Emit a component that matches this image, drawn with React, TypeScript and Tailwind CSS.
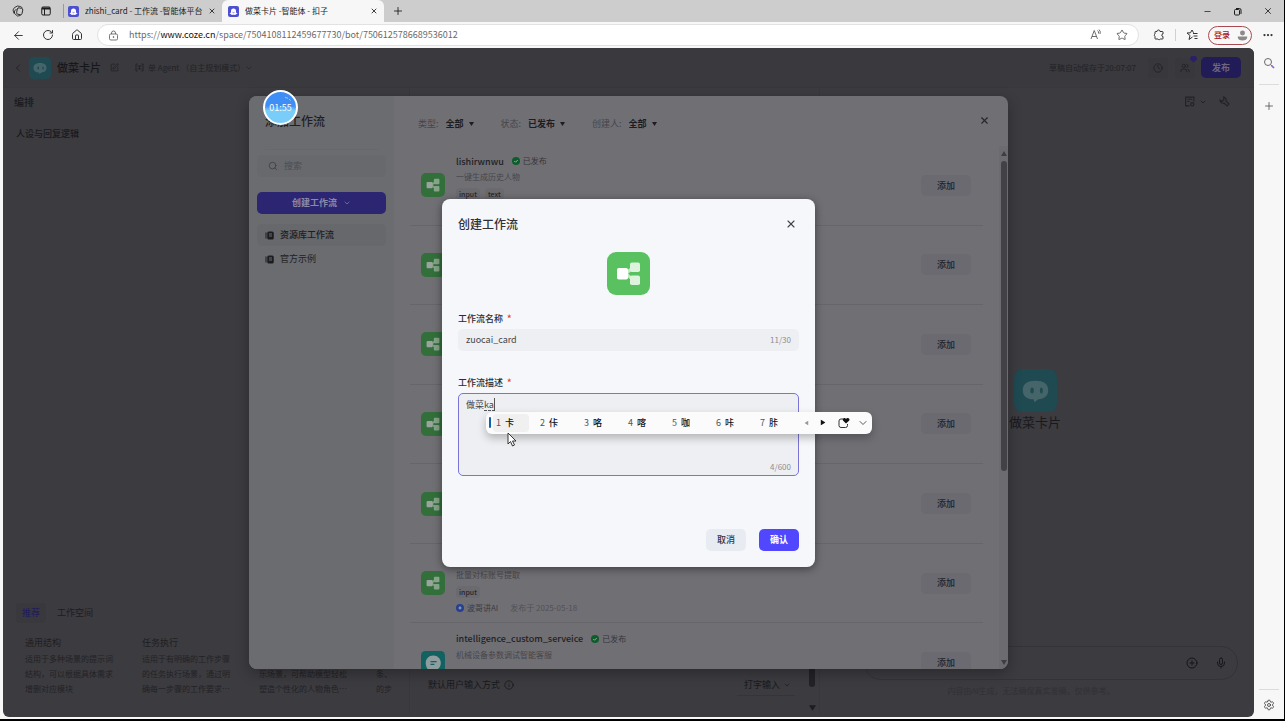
import { useState } from 'react';
import type { ReactNode } from 'react';
import {
  ArrowLeft,
  ChevronDown,
  ChevronLeft,
  CirclePlus,
  Clock,
  Home,
  Info,
  Mic,
  Minus,
  MoreHorizontal,
  Plus,
  RotateCw,
  Search,
  Settings,
  SquarePen,
  Star,
  Users,
  X,
} from 'lucide-react';

interface Workflow {
  id: number;
  name?: string;
  description?: string;
  tags?: string[];
  author?: string;
  publishedAt?: string;
  icon: 'flow' | 'chat';
}

const WORKFLOWS: Workflow[] = [
  { id: 1, name: 'lishirwnwu', description: '一键生成历史人物', tags: ['input', 'text'], icon: 'flow' },
  { id: 2, icon: 'flow' },
  { id: 3, icon: 'flow' },
  { id: 4, icon: 'flow' },
  { id: 5, icon: 'flow' },
  {
    id: 6,
    description: '批量对标账号提取',
    tags: ['input'],
    author: '波哥讲AI',
    publishedAt: '发布于 2025-05-18',
    icon: 'flow',
  },
  { id: 7, name: 'intelligence_custom_serveice', description: '机械设备参数调试智能客服', icon: 'chat' },
];

const TEMPLATES = [
  { title: '通用结构', lines: ['适用于多种场景的提示词', '结构，可以根据具体需求', '增删对应模块'] },
  { title: '任务执行', lines: ['适用于有明确的工作步骤', '的任务执行场景，通过明', '确每一步骤的工作要求…'] },
  { title: '', lines: ['', '乐场景，可帮助模型轻松', '塑造个性化的人物角色…'] },
  { title: '', lines: ['', '条、', '的步'] },
];

const FILTERS = [
  { id: 'type', label: '类型:', value: '全部' },
  { id: 'status', label: '状态:', value: '已发布' },
  { id: 'creator', label: '创建人:', value: '全部' },
];

const CANDIDATES = ['卡', '佧', '咯', '喀', '咖', '咔', '胩'];

function Favicon() {
  return (
    <svg className="size-[11px] shrink-0" viewBox="0 0 22 22">
      <rect width="22" height="22" rx="4" fill="#4d4fd0" />
      <path d="M6 10a5 5 0 0 1 10 0v3l3 2-3 1.5c-1 2-3 1-5 1s-4 1-5-1L3 15l3-2z" fill="#fff" />
      <path d="M9 12.5q2 2 4 0" fill="none" stroke="#4d4fd0" strokeWidth="1.5" />
    </svg>
  );
}

function BotAvatar({ className }: { className: string }) {
  return (
    <svg className={className} viewBox="0 0 44 44">
      <rect width="44" height="44" rx="9" fill="#1f4a52" />
      <path d="M22 12c8 0 13 3 13 9.500s-4 9-10 9.500l-4 3-1-3c-7 0-11-3-11-9.500S14 12 22 12z" fill="#45656a" />
      <ellipse cx="18.500" cy="22" rx="1.800" ry="3" fill="#1f4a52" />
      <ellipse cx="28" cy="22" rx="1.500" ry="3" fill="#1f4a52" />
    </svg>
  );
}

function FlowIcon({ className, bright }: { className: string; bright?: boolean }) {
  return (
    <svg className={className} viewBox="0 0 43 43">
      <rect width="43" height="43" rx="9" fill={bright ? '#59c160' : '#336f3b'} />
      <path d="M19 21.500 26 15.500M19 21.500 26 28" stroke={bright ? '#c4eac7' : '#7d9f81'} strokeWidth="3" />
      <rect x="23" y="10.500" width="10" height="9.500" rx="1.800" fill={bright ? '#ddf3de' : '#84a388'} />
      <rect x="23" y="23.500" width="10" height="9.500" rx="1.800" fill={bright ? '#ddf3de' : '#84a388'} />
      <rect x="10" y="16" width="11" height="11.500" rx="1.800" fill={bright ? '#ffffff' : '#9aa39d'} />
    </svg>
  );
}

function ChatIcon() {
  return (
    <svg className="size-6" viewBox="0 0 43 43">
      <rect width="43" height="43" rx="8" fill="#116260" />
      <path d="M22 8c8 0 13.500 6 13.500 13.500S30 35 22 35c-3 0-5-.5-7 .5l-5 2 1.500-6C9.500 29 8.500 25 8.500 21.500 8.500 14 14 8 22 8z" fill="#8f9d9f" />
      <path d="M17 19h11M17 24h7" stroke="#116260" strokeWidth="2.500" />
    </svg>
  );
}

function BookIcon() {
  return (
    <svg className="size-[9px]" viewBox="0 0 18 18">
      <path d="M2 3v12" stroke="#2c2c31" strokeWidth="2.500" />
      <rect x="4.500" y="1" width="13" height="16" rx="3" fill="#1c1c21" />
      <path d="M8 6h6M8 10h6" stroke="#6b6c70" strokeWidth="2" />
    </svg>
  );
}

function Caret({ className }: { className: string }) {
  return (
    <svg className={className} viewBox="0 0 10 8">
      <path d="M0 0h10L5 8z" fill="currentColor" />
    </svg>
  );
}

function Published() {
  return (
    <span className="flex items-center gap-[3px] text-[8px] text-[#35353a]">
      <svg className="size-2" viewBox="0 0 16 16">
        <circle cx="8" cy="8" r="8" fill="#0d5c2c" />
        <path d="m4.500 8 2.500 2.500 4.500-4.500" stroke="#a0a8a3" strokeWidth="2" fill="none" />
      </svg>
      已发布
    </span>
  );
}

function BrowserTab({ title, active }: { title: string; active?: boolean }) {
  return (
    <div className={`flex items-center gap-1.5 pr-1.5 text-[8px] text-[#1d1d1d] ${active ? 'w-[162px] rounded-t-md bg-[#f7f7f7] pl-1.5' : 'w-[158px] pl-1'}`}>
      <Favicon />
      <span className="min-w-0 flex-1 whitespace-nowrap">{title}</span>
      <button aria-label="关闭标签页">
        <X className="size-2" strokeWidth={2.5} />
      </button>
    </div>
  );
}

function TabStrip() {
  return (
    <header className="flex h-[22px] shrink-0 bg-[#cdcdcd] text-[#1c1c1c]">
      <button className="flex w-[35px] items-center justify-center" aria-label="工作区">
        <svg className="size-3" viewBox="0 0 24 24" fill="none" stroke="currentColor" strokeWidth="1.700">
          <path d="m4 17-2-7 3-5 6-3 6 1 4 3" />
          <rect x="10" y="6" width="11" height="13" rx="3" transform="rotate(12 15 12)" />
          <path d="m9 8-4 4v5l6 5 6-1" />
        </svg>
      </button>
      <button className="flex w-[21px] items-center justify-center" aria-label="标签操作">
        <svg className="size-[10px]" viewBox="0 0 20 20" fill="none" stroke="currentColor" strokeWidth="2">
          <rect x="1.500" y="2" width="17" height="16" rx="2.500" />
          <path d="M2 5h16" strokeWidth="4" />
          <path d="M7 6v12" />
        </svg>
      </button>
      <div className="ml-[7px] h-3.5 w-px self-center bg-[#9a9a9a]" />
      <BrowserTab title="zhishi_card - 工作流 -智能体平台" />
      <BrowserTab title="做菜卡片 -智能体 - 扣子" active />
      <button className="flex w-[28px] items-center justify-center" aria-label="新建标签页">
        <Plus className="size-3" strokeWidth={1.75} />
      </button>
      <div className="ml-auto flex items-center gap-[21px] pr-[11px]">
        <button aria-label="最小化"><Minus className="size-[9px]" /></button>
        <button aria-label="还原">
          <svg className="size-[9px]" viewBox="0 0 18 18" fill="none" stroke="currentColor" strokeWidth="2">
            <rect x="3" y="5" width="10" height="11" rx="2" />
            <path d="M6 3h7a3 3 0 0 1 3 3v8" />
          </svg>
        </button>
        <button aria-label="关闭"><X className="size-[10px]" /></button>
      </div>
    </header>
  );
}

function AddressBar() {
  return (
    <div className="flex h-[26px] shrink-0 items-center bg-[#f7f7f7] text-[#333]">
      <div className="flex w-[97px] shrink-0 items-center gap-[17px] pl-3">
        <button aria-label="后退"><ArrowLeft className="size-[13px]" strokeWidth={1.75} /></button>
        <button aria-label="刷新"><RotateCw className="size-3" strokeWidth={2} /></button>
        <button aria-label="主页"><Home className="size-3" strokeWidth={2} /></button>
      </div>
      <div className="flex h-[22px] min-w-0 flex-1 items-center rounded-full border border-[#e2e2e2] bg-white px-2.5">
        <svg className="size-[11px] shrink-0" viewBox="0 0 22 22" fill="none" stroke="#666" strokeWidth="1.800">
          <rect x="3" y="8" width="16" height="12" rx="2.500" />
          <path d="M7 8V6a4 4 0 0 1 8 0v2" />
          <circle cx="11" cy="14" r="1" fill="#666" />
        </svg>
        <a href="#" className="ml-[10px] min-w-0 flex-1 truncate text-[9px] text-[#6a6a6a]">
          https://<span className="text-[#111]">www.coze.cn</span>/space/7504108112459677730/bot/7506125786689536012
        </a>
        <button aria-label="朗读此页面">
          <svg className="size-3" viewBox="0 0 24 24" fill="none" stroke="#555" strokeWidth="1.700">
            <path d="m2 20 6.500-17L15 20M4 15h9" />
            <path d="M15 3q3 2 2 6M18 1q4 4 2 9" />
          </svg>
        </button>
        <button className="ml-3.5" aria-label="收藏"><Star className="size-3" color="#555" strokeWidth={1.75} /></button>
      </div>
      <div className="flex shrink-0 items-center pr-2.5 pl-3.5">
        <button aria-label="扩展">
          <svg className="size-3" viewBox="0 0 24 24" fill="none" stroke="currentColor" strokeWidth="2">
            <path d="M8 5a3 3 0 0 1 6 0h5a1 1 0 0 1 1 1v4a2.500 2.500 0 0 0 0 5v4a1 1 0 0 1-1 1h-4a3 3 0 0 1-5 0H5a1 1 0 0 1-1-1v-4a3 3 0 0 1 0-5V6a1 1 0 0 1 1-1z" />
          </svg>
        </button>
        <div className="ml-2.5 h-3 w-px bg-[#d0d0d0]" />
        <button className="ml-2.5" aria-label="收藏夹">
          <svg className="size-3" viewBox="0 0 24 24" fill="none" stroke="currentColor" strokeWidth="2">
            <path d="m13 16-7 5 2-8-6-5 7-.5L12 2l3 5.500M14 9h9M15 14h8M17 19h6" />
          </svg>
        </button>
        <button className="ml-2.5 flex h-[19px] w-[44px] items-center justify-between rounded-full border border-[#a94a50] pr-[3px] pl-[5px] text-[8px] font-medium text-[#a3141f]">
          登录
          <svg className="size-[11px]" viewBox="0 0 20 20" fill="#8a8a8a">
            <circle cx="10" cy="5.500" r="4.500" />
            <path d="M1.500 12h17v1c0 4-4 6-8.500 6s-8.500-2-8.500-6z" />
          </svg>
        </button>
        <button className="ml-2.5" aria-label="更多"><MoreHorizontal className="size-3" strokeWidth={2.5} /></button>
      </div>
    </div>
  );
}

function BrowserSidebar() {
  return (
    <aside className="flex w-[30px] shrink-0 flex-col items-center bg-[#f7f7f7] pt-[9px] pb-2 text-[#444]">
      <button aria-label="搜索">
        <svg className="size-3" viewBox="0 0 24 24" fill="none" strokeWidth="2">
          <circle cx="10" cy="10" r="7" stroke="#6a6a6a" />
          <path d="m15 15 3 3" stroke="#6a6a6a" />
          <path d="m17 17 5 5" stroke="#9b5fd0" strokeWidth="3.500" />
        </svg>
      </button>
      <div className="mt-[15px] h-px w-5 bg-[#dcdcdc]" />
      <button className="mt-[15px]" aria-label="添加"><Plus className="size-3" strokeWidth={1.5} /></button>
      <div className="mt-auto h-px w-5 bg-[#dcdcdc]" />
      <button className="mt-[9px]" aria-label="设置"><Settings className="size-3" strokeWidth={1.75} /></button>
    </aside>
  );
}

function EditorHeader() {
  return (
    <div className="flex h-10 shrink-0 items-center border-b border-[#38373b] bg-[#3a393d] pr-[13px] pl-[9px] text-[#222226]">
      <ChevronLeft className="size-3" />
      <BotAvatar className="ml-[5px] size-[22px]" />
      <h1 className="ml-[6px] text-[11px] font-medium text-[#17171b]">做菜卡片</h1>
      <SquarePen className="ml-[9px] size-[9px]" />
      <svg className="ml-4 size-[9px]" viewBox="0 0 18 18" fill="none" stroke="currentColor" strokeWidth="2">
        <path d="M5 2H2v14h3M13 2h3v14h-3M5 6h8M9 6v6M5 12h8" />
      </svg>
      <button className="ml-1 flex items-center text-[8px]">
        单 Agent （自主规划模式）
        <ChevronDown className="size-2" />
      </button>
      <span className="ml-auto text-[8px]">草稿自动保存于20:07:07</span>
      <button className="ml-3 flex size-5 items-center justify-center rounded bg-[#38373b]" aria-label="历史">
        <Clock className="size-[10px]" />
      </button>
      <button className="relative ml-[7px] flex size-5 items-center justify-center rounded bg-[#38373b]" aria-label="协作">
        <Users className="size-[10px]" />
        <svg className="absolute -top-0.5 -right-0.5 size-[7px]" viewBox="0 0 14 14">
          <path d="M3 0h8l3 4v3l-7 6-7-6V4z" fill="#2a2069" />
        </svg>
      </button>
      <button className="ml-1.5 h-[21px] w-10 rounded-[5px] bg-[#211b57] text-[9px] font-bold text-[#69677d]">发布</button>
    </div>
  );
}

function EditorBody() {
  return (
    <div className="grid min-h-0 flex-1 grid-cols-[407px_410px_1fr] text-[#222226]">
      <section className="flex min-w-0 flex-col overflow-hidden border-r border-[#39383c]">
        <h2 className="mt-1.5 ml-[11px] text-[10px] leading-4 font-medium text-[#19191d]">编排</h2>
        <h3 className="mt-4 ml-[13px] text-[9px] leading-4 font-medium text-[#19191d]">人设与回复逻辑</h3>
        <div className="mt-auto ml-[13px] flex items-center gap-[11px] text-[9px]">
          <button className="h-5 w-[30px] rounded bg-[#39383d] font-medium text-[#231e5c]">推荐</button>
          <button className="text-[#1c1c20]">工作空间</button>
        </div>
        <div className="mt-3 mb-[21px] ml-[22px] flex">
          {TEMPLATES.map((template, i) => (
            <div key={i} className="w-[117px] shrink-0">
              <p className="h-4 text-[9px] leading-4 text-[#1e1e22]">{template.title}</p>
              {template.lines.map((line, j) => (
                <p key={j} className="h-[15px] text-[8px] leading-[15px] text-[#222226]">{line}</p>
              ))}
            </div>
          ))}
        </div>
      </section>

      <section className="flex items-end border-r border-[#39383c] pb-[21px] pl-[18px] text-[9px] text-[#19191d]">
        <label htmlFor="input-mode" className="flex h-[22px] items-center gap-1">
          默认用户输入方式
          <Info className="size-[10px]" />
        </label>
        <div className="relative ml-auto flex h-[22px] items-center border-b border-[#353438]">
          <select id="input-mode" className="w-[58px] appearance-none pl-[7px] outline-none">
            <option>打字输入</option>
          </select>
          <ChevronDown className="pointer-events-none absolute right-1 size-2" />
        </div>
        <div className="-mb-[21px] ml-2.5 flex h-full w-3.5 flex-col items-center justify-end gap-[18px] pb-1.5">
          <div className="h-24 w-1.5 rounded-full bg-[#232327]" />
          <Caret className="h-1.5 w-[7px] text-[#1d1d20]" />
        </div>
      </section>

      <section className="flex min-w-0 flex-col">
        <div className="flex items-center justify-end gap-2 pt-2 pr-6">
          <button className="flex items-center gap-1" aria-label="调试">
            <svg className="size-[11px]" viewBox="0 0 20 20" fill="none" stroke="currentColor" strokeWidth="2">
              <path d="M10 18H3V2h15v8M6 6h9M6 10h4" />
              <circle cx="15" cy="15" r="3" />
            </svg>
            <ChevronDown className="size-2" strokeWidth={3} />
          </button>
          <button className="ml-1" aria-label="工具">
            <svg className="size-[11px]" viewBox="0 0 22 22" fill="none" stroke="currentColor" strokeWidth="2.200">
              <path d="M9 2a6 6 0 0 1 5 8l6 6-4 4-6-6a6 6 0 0 1-8-6l4 3 4-4z" />
            </svg>
          </button>
        </div>
        <div className="flex flex-1 flex-col items-center justify-center pt-12 pr-1">
          <BotAvatar className="size-[43px]" />
          <p className="text-[13px] leading-5 text-[#19191d]">做菜卡片</p>
        </div>
        <div className="mr-4 ml-11 flex h-[34px] items-center justify-end gap-[17px] rounded-full border border-[#343337] pr-2.5 text-[#17171a]">
          <button aria-label="附件"><CirclePlus className="size-3" /></button>
          <button aria-label="语音"><Mic className="size-3" /></button>
        </div>
        <p className="mt-[3px] mb-[18px] pr-3 text-center text-[8px] leading-4 text-[#313035]">
          内容由AI生成，无法确保真实准确，仅供参考。
        </p>
      </section>
    </div>
  );
}

function WorkflowRow({ workflow }: { workflow: Workflow }) {
  return (
    <li className="flex items-center border-b border-[#66656a] pr-3 pl-[11px]">
      {workflow.icon === 'flow' ? <FlowIcon className="size-6" /> : <ChatIcon />}
      <div className="ml-[11px] h-16 flex-1">
        <div className="flex h-4 items-center gap-2">
          <span className="text-[9px] font-medium text-[#1f1f24]">{workflow.name}</span>
          {workflow.name && <Published />}
        </div>
        <p className="h-4 text-[8px] leading-4 text-[#46464b]">{workflow.description}</p>
        <div className="flex h-[18px] items-center gap-[5px]">
          {workflow.tags?.map((tag) => (
            <span key={tag} className="rounded-sm bg-[#6b6a6f] px-[3px] text-[7px] leading-3 font-medium text-[#27272c]">{tag}</span>
          ))}
        </div>
        {workflow.author && (
          <div className="flex h-3.5 items-center text-[8px] text-[#3b3b41]">
            <svg className="mr-[3px] size-2" viewBox="0 0 16 16">
              <circle cx="8" cy="8" r="8" fill="#26408e" />
              <path d="m8 4 3.500 4L8 11.500 4.500 8z" fill="#8792b8" />
            </svg>
            {workflow.author}
            <span className="ml-3 text-[#515156]">{workflow.publishedAt}</span>
          </div>
        )}
      </div>
      <button className="h-[21px] w-[50px] rounded-[5px] bg-[#6b6a70] text-[9px] font-medium text-[#222229]">添加</button>
    </li>
  );
}

function AddWorkflowPanel() {
  return (
    <div className="flex h-full w-[759px] max-w-full overflow-hidden rounded-lg bg-[#706f74] shadow-[0_4px_14px_rgba(0,0,0,0.3)]">
      <nav className="w-[145px] shrink-0 bg-[#6b6c70] px-2 pt-4">
        <h2 className="ml-2 text-[12px] leading-[18px] font-medium text-[#1f1f24]">添加工作流</h2>
        <div className="mx-2 mt-[19px] h-px bg-[#67686c]" />
        <label className="mt-[5px] flex h-[22px] items-center rounded-[5px] bg-[#68696d] pl-[11px] text-[#3f4045]">
          <Search className="size-[10px] shrink-0" />
          <input type="search" aria-label="搜索" placeholder="搜索" className="ml-1.5 w-full min-w-0 bg-transparent text-[9px] placeholder-[#4c4d52] outline-none" />
        </label>
        <button className="mt-[15px] flex h-[22px] w-full items-center justify-center gap-1.5 rounded-[5px] bg-[#2c2672] text-[9px] font-bold text-[#8b8aa6]">
          创建工作流
          <ChevronDown className="size-2" />
        </button>
        <a href="#" className="mt-2.5 flex h-[22px] items-center gap-1.5 rounded-[5px] bg-[#67686b] pl-2 text-[9px] font-medium text-[#1c1c21]">
          <BookIcon />
          资源库工作流
        </a>
        <a href="#" className="mt-0.5 flex h-[22px] items-center gap-1.5 pl-2 text-[9px] text-[#1f1f24]">
          <BookIcon />
          官方示例
        </a>
      </nav>

      <div className="flex min-w-0 flex-1 flex-col pl-4">
        <div className="flex h-[50px] shrink-0 items-center gap-[27px] pt-1.5 pr-[18px] pl-2 text-[9px]">
          {FILTERS.map((filter) => (
            <div key={filter.id} className="flex items-center">
              <label htmlFor={filter.id} className="text-[#45454a]">{filter.label}</label>
              <select id={filter.id} className="ml-[7px] appearance-none font-bold text-[#1c1c21] outline-none">
                <option>{filter.value}</option>
              </select>
              <Caret className="ml-1 h-1 w-[5px] text-[#1c1c21]" />
            </div>
          ))}
          <button className="mb-2 ml-auto" aria-label="关闭"><X className="size-[11px] text-[#27272b]" strokeWidth={2.5} /></button>
        </div>
        <div className="flex min-h-0 flex-1 overflow-hidden">
          <ul className="grid h-[557px] min-w-0 flex-1 grid-rows-7">
            {WORKFLOWS.map((workflow) => (
              <WorkflowRow key={workflow.id} workflow={workflow} />
            ))}
          </ul>
          <div className="ml-4 flex w-[9px] shrink-0 flex-col items-center bg-[#6c6b6f] pt-[5px] pb-1 text-[#3e3e42]">
            <Caret className="h-[5px] w-1.5 rotate-180" />
            <div className="mt-[5px] h-[310px] w-1.5 rounded-full bg-[#424145]" />
            <Caret className="mt-auto h-[5px] w-1.5" />
          </div>
        </div>
      </div>
    </div>
  );
}

function CandidateBar() {
  return (
    <div className="absolute top-[18px] left-[27px] flex h-[22px] w-[386px] items-center rounded-md bg-[#fbfbfc] px-[3px] shadow-[0_4px_8px_rgba(0,0,0,0.25)]">
      <div className="h-[11px] w-0.5 rounded-full bg-[#0f62b0]" />
      <ol className="ml-0.5 flex gap-2">
        {CANDIDATES.map((candidate, i) => (
          <li key={candidate} className={`flex h-[18px] w-9 items-center gap-1 rounded pl-[3px] text-[9px] text-[#555] ${i === 0 ? 'bg-[#f0f0f0]' : ''}`}>
            {i + 1}
            <span className="font-medium text-[#111]">{candidate}</span>
          </li>
        ))}
      </ol>
      <div className="ml-auto flex items-center">
        <Caret className="h-1 w-[5px] rotate-90 text-[#999]" />
        <Caret className="ml-[11px] h-[5px] w-1.5 -rotate-90 text-[#111]" />
        <svg className="ml-3 size-3" viewBox="0 0 24 24" fill="none" stroke="#333" strokeWidth="2">
          <path d="M11 4H6a4 4 0 0 0-4 4v9a4 4 0 0 0 4 4h9a4 4 0 0 0 4-4v-3" />
          <path d="M16 13 10.500 7.500a3 3 0 0 1 1-5C13.500 1.500 15 2.500 16 4c1-1.500 3-2.500 5-1.500a3 3 0 0 1 1 5z" fill="#111" stroke="none" />
        </svg>
        <ChevronDown className="ml-[7px] size-3 text-[#444]" strokeWidth={1.75} />
      </div>
    </div>
  );
}

function FieldLabel({ htmlFor, children }: { htmlFor: string; children: ReactNode }) {
  return (
    <label htmlFor={htmlFor} className="flex gap-1 text-[9px] leading-4 font-medium text-[#2c2c32]">
      {children}
      <span className="font-bold text-[#e5493a]">*</span>
    </label>
  );
}

function CreateWorkflowDialog() {
  const [name, setName] = useState('zuocai_card');
  const [description, setDescription] = useState('做菜ka');

  return (
    <div role="dialog" aria-label="创建工作流" className="w-[373px] rounded-lg bg-[#f5f7fa] p-4 shadow-[0_2px_8px_rgba(0,0,0,0.45)]">
      <div className="flex items-center justify-between pr-0.5">
        <h2 className="text-[12px] leading-[18px] font-medium text-[#303036]">创建工作流</h2>
        <button aria-label="关闭"><X className="size-3 text-[#44444a]" strokeWidth={2.25} /></button>
      </div>
      <FlowIcon className="mx-auto mt-[19px] size-[43px]" bright />

      <div className="mt-4">
        <FieldLabel htmlFor="workflow-name">工作流名称</FieldLabel>
        <div className="mt-0.5 flex h-[22px] items-center rounded-[5px] bg-[#eeeff2] px-2 text-[#8c8d92]">
          <input
            id="workflow-name"
            value={name}
            maxLength={30}
            onChange={(e) => setName(e.target.value)}
            className="min-w-0 flex-1 bg-transparent text-[9px] text-[#45464b] outline-none"
          />
          <span className="text-[8px]">{name.length}/30</span>
        </div>
      </div>

      <div className="mt-6">
        <FieldLabel htmlFor="workflow-description">工作流描述</FieldLabel>
        <div className="relative mt-0.5 flex h-[83px] flex-col rounded-[5px] border border-[#7a74d6] bg-[#eeeff2] px-[7px] pt-[3px]">
          <textarea
            id="workflow-description"
            value={description}
            maxLength={600}
            onChange={(e) => setDescription(e.target.value)}
            className="w-full flex-1 resize-none bg-transparent text-[9px] leading-4 text-[#45464b] outline-none"
          />
          <span className="text-right text-[8px] leading-4 text-[#8c8d92]">{description.length}/600</span>
          {/* pinyin still being composed */}
          <span className="absolute top-1 left-[25px] h-[13px] w-[11px] border-r border-b border-r-[#555] border-b-[#555] [border-bottom-style:dashed]" />
          <CandidateBar />
          <svg className="absolute top-[38px] left-12 h-[15px] w-2.5" viewBox="0 0 20 30">
            <path d="M2 2v22l5-5 4 9 4-2-4-8h7z" fill="#fff" stroke="#222" strokeWidth="1.800" />
          </svg>
        </div>
      </div>

      <div className="mt-[53px] flex justify-end gap-[13px] text-[9px]">
        <button className="h-[22px] w-10 rounded-[5px] bg-[#e9ebf2] font-medium text-[#33343c]">取消</button>
        <button className="h-[22px] w-10 rounded-[5px] bg-[#5147ff] font-bold text-white">确认</button>
      </div>
    </div>
  );
}

function RecordingTimer() {
  return (
    <div className="absolute top-[42px] left-[260px] flex size-[35px] items-center justify-center rounded-full border-2 border-white bg-linear-to-b from-[#3f8ef5] from-45% to-[#79cdf8] to-60% text-[9px] text-white">
      01:55
      <svg className="absolute top-1 right-1 size-2" viewBox="0 0 16 16" fill="none" stroke="#b9dcff" strokeWidth="1.500">
        <path d="M2 3q4 0 6 2M10 6l3 3" />
      </svg>
    </div>
  );
}

export default function App() {
  return (
    <div className="flex h-screen flex-col overflow-hidden border-r border-b-2 border-black bg-[#f7f7f7] font-['Noto_Sans_CJK_SC',sans-serif]">
      <TabStrip />
      <AddressBar />
      <div className="flex min-h-0 flex-1">
        <main className="relative mb-0.5 ml-[3px] flex min-w-0 flex-1 flex-col overflow-hidden rounded-md bg-[#3c3b3f]">
          <EditorHeader />
          <EditorBody />
          <div className="absolute inset-0 flex justify-center py-12">
            <AddWorkflowPanel />
          </div>
          <div className="absolute inset-0 flex items-center justify-center">
            <CreateWorkflowDialog />
          </div>
          <RecordingTimer />
        </main>
        <BrowserSidebar />
      </div>
    </div>
  );
}
